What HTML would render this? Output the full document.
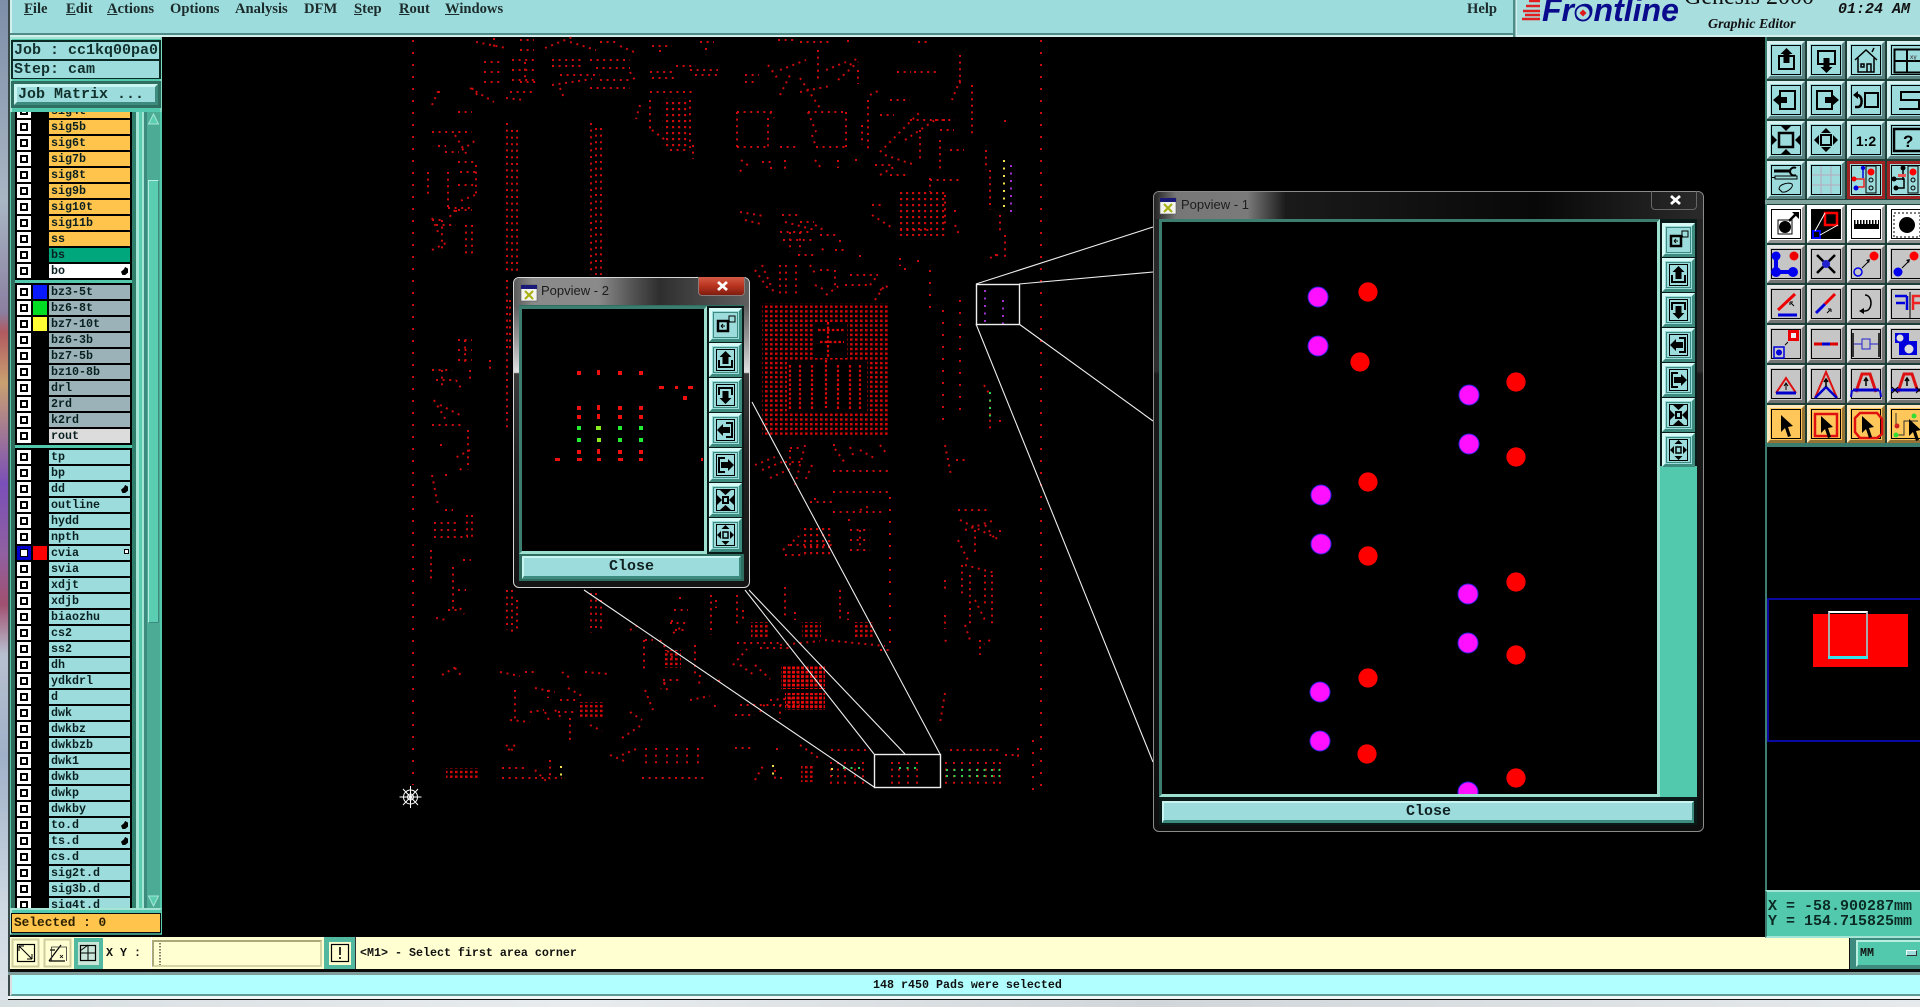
<!DOCTYPE html>
<html><head><meta charset="utf-8"><title>Genesis 2000</title>
<style>
html,body{margin:0;padding:0;background:#000;overflow:hidden}
#p{position:relative;width:1920px;height:1007px;overflow:hidden;background:#000;font-family:"Liberation Mono",monospace;font-weight:bold;color:#102020}
#p div{position:absolute;box-sizing:border-box}
.m{font:bold 14.6px/20px "Liberation Serif",serif;top:-1px;color:#1c2b2b}
.m u{text-decoration:underline}
.t{font-size:15px;line-height:18px;white-space:pre;color:#12302c}
.r{left:49px;width:81px;height:14px;font-size:11.67px;line-height:14px;padding-left:2px;background:#9cdcdc;color:#0a2020;white-space:pre}
.r:before{content:"";position:absolute;left:-29px;top:3px;width:8px;height:8px;box-sizing:border-box;border:2px solid #000;background:#fff;outline:3px solid #fff}
.o{background:#ffc44c}.g{background:#9bb3b8}
.c{font-size:11.67px;white-space:pre;color:#101010}
.h:after{content:"";position:absolute;left:72px;top:3px;width:7px;height:8px;background:#000;clip-path:polygon(0 60%,40% 30%,60% 0,100% 20%,100% 70%,60% 100%,20% 100%)}
.bev{border:3px solid;border-color:#c8f5f0 #3d8a7e #3d8a7e #c8f5f0;background:#9cdcdc}
.ti{font:13px/16px "Liberation Sans",sans-serif;color:#1a1a1a;white-space:pre}
</style></head><body><div id="p">

<!-- desktop chrome -->
<div style="left:0;top:0;width:8px;height:1007px;background:linear-gradient(180deg,#7d8ea8 0,#a9b6c4 20%,#8a7fa0 31%,#b25a60 33%,#c9a070 38%,#7a4fb8 48%,#9060a0 55%,#a05070 60%,#b8c0d0 65%,#a0b0c8 75%,#cdd8e2 90%,#dfe6ea 100%)"></div>
<div style="left:8px;top:0;width:2px;height:1000px;background:#3a4a4a"></div>

<!-- menu bar -->
<div style="left:10px;top:0;width:1503px;height:37px;background:#9cdcdc;border-bottom:2px solid #d3f0ee;border-left:2px solid #d3f0ee"></div>
<div style="left:10px;top:33px;width:1503px;height:2px;background:#4f8b87"></div>
<div style="left:1513px;top:0;width:4px;height:37px;background:linear-gradient(90deg,#4f8b87 0 60%,#d3f0ee 60%)"></div>
<div style="left:1517px;top:0;width:403px;height:37px;background:#a8dede;border-bottom:2px solid #d3f0ee"></div>
<div class="m" style="left:24px"><u>F</u>ile</div>
<div class="m" style="left:66px"><u>E</u>dit</div>
<div class="m" style="left:107px"><u>A</u>ctions</div>
<div class="m" style="left:170px">Options</div>
<div class="m" style="left:235px">Analysis</div>
<div class="m" style="left:304px">DFM</div>
<div class="m" style="left:354px"><u>S</u>tep</div>
<div class="m" style="left:399px"><u>R</u>out</div>
<div class="m" style="left:445px"><u>W</u>indows</div>
<div class="m" style="left:1467px">Help</div>
<div style="left:1542px;top:-8px;font:italic bold 32px/36px 'Liberation Sans',sans-serif;color:#0a0a8c;white-space:pre">Frontline</div>
<div style="left:1684px;top:-18px;font:24px/30px 'Liberation Serif',serif;color:#111;white-space:pre">Genesis 2000</div>
<div style="left:1708px;top:16px;font:italic bold 14px/17px 'Liberation Serif',serif;color:#111;white-space:pre">Graphic Editor</div>
<div style="left:1838px;top:1px;font:italic bold 15px/18px 'Liberation Mono',monospace;color:#111;white-space:pre">01:24 AM</div>

<!-- left panel -->
<div style="left:10px;top:37px;width:152px;height:898px;background:#52c9ac;border:2px solid;border-color:#a5e5d5 #7fd8c0 #3d8a7e #a5e5d5"></div>
<div style="left:11px;top:40px;width:150px;height:39px;background:#0c2a24"></div>
<div style="left:13px;top:42px;width:146px;height:17px;background:#9cdcdc"></div>
<div style="left:13px;top:61px;width:146px;height:17px;background:#9cdcdc"></div>
<div class="t" style="left:14px;top:42px">Job : cc1kq00pa0</div>
<div class="t" style="left:14px;top:61px">Step: cam</div>
<div style="left:11px;top:81px;width:150px;height:27px;background:#2f6f62"></div>
<div class="bev" style="left:14px;top:84px;width:144px;height:21px"></div>
<div class="t" style="left:18px;top:86px">Job Matrix ...</div>

<!-- layer list -->
<div style="left:10px;top:112px;width:152px;height:800px;background:#52c9ac"></div>
<div style="left:11px;top:112px;width:4px;height:796px;background:#2f6b5a"></div>
<div style="left:132px;top:112px;width:4px;height:796px;background:#2f7f6c"></div>
<div style="left:136px;top:112px;width:3px;height:796px;background:#a5e5d5"></div>
<div style="left:139px;top:112px;width:3px;height:796px;background:#5bcdb0"></div>
<div style="left:142px;top:112px;width:2px;height:796px;background:#a5e5d5"></div>
<div style="left:144px;top:112px;width:3px;height:796px;background:#3d8a7e"></div>
<div style="left:147px;top:112px;width:13px;height:796px;background:#4cab95"></div>
<div style="left:148px;top:180px;width:11px;height:443px;background:#5bcdb0;border:1px solid;border-color:#b8efe0 #3d8a7e #3d8a7e #b8efe0"></div>
<div style="left:15px;top:112px;width:117px;height:796px;background:#000;overflow:hidden"><div style="left:-15px;top:-112px;width:160px;height:920px">
<div class="r o" style="top:104px">sig4t</div>
<div class="r o" style="top:120px">sig5b</div>
<div class="r o" style="top:136px">sig6t</div>
<div class="r o" style="top:152px">sig7b</div>
<div class="r o" style="top:168px">sig8t</div>
<div class="r o" style="top:184px">sig9b</div>
<div class="r o" style="top:200px">sig10t</div>
<div class="r o" style="top:216px">sig11b</div>
<div class="r o" style="top:232px">ss</div>
<div class="r" style="top:248px;background:#00a67c">bs</div>
<div class="r h" style="top:264px;background:#fff">bo</div>
<div style="left:0;top:280px;width:140px;height:3px;background:#52c9ac"></div>
<div class="r g" style="top:285px">bz3-5t</div>
<div class="r g" style="top:301px">bz6-8t</div>
<div class="r g" style="top:317px">bz7-10t</div>
<div class="r g" style="top:333px">bz6-3b</div>
<div class="r g" style="top:349px">bz7-5b</div>
<div class="r g" style="top:365px">bz10-8b</div>
<div class="r g" style="top:381px">drl</div>
<div class="r g" style="top:397px">2rd</div>
<div class="r g" style="top:413px">k2rd</div>
<div class="r" style="top:429px;background:#dcdcdc">rout</div>
<div style="left:0;top:445px;width:140px;height:3px;background:#52c9ac"></div>
<div class="r" style="top:450px">tp</div>
<div class="r" style="top:466px">bp</div>
<div class="r h" style="top:482px">dd</div>
<div class="r" style="top:498px">outline</div>
<div class="r" style="top:514px">hydd</div>
<div class="r" style="top:530px">npth</div>
<div class="r" style="top:546px">cvia</div>
<div class="r" style="top:562px">svia</div>
<div class="r" style="top:578px">xdjt</div>
<div class="r" style="top:594px">xdjb</div>
<div class="r" style="top:610px">biaozhu</div>
<div class="r" style="top:626px">cs2</div>
<div class="r" style="top:642px">ss2</div>
<div class="r" style="top:658px">dh</div>
<div class="r" style="top:674px">ydkdrl</div>
<div class="r" style="top:690px">d</div>
<div class="r" style="top:706px">dwk</div>
<div class="r" style="top:722px">dwkbz</div>
<div class="r" style="top:738px">dwkbzb</div>
<div class="r" style="top:754px">dwk1</div>
<div class="r" style="top:770px">dwkb</div>
<div class="r" style="top:786px">dwkp</div>
<div class="r" style="top:802px">dwkby</div>
<div class="r h" style="top:818px">to.d</div>
<div class="r h" style="top:834px">ts.d</div>
<div class="r" style="top:850px">cs.d</div>
<div class="r" style="top:866px">sig2t.d</div>
<div class="r" style="top:882px">sig3b.d</div>
<div class="r" style="top:898px">sig4t.d</div>
<div style="left:33px;top:285px;width:14px;height:14px;background:#0a1aff"></div>
<div style="left:33px;top:301px;width:14px;height:14px;background:#00dd22"></div>
<div style="left:33px;top:317px;width:14px;height:14px;background:#ffff33"></div>
<div style="left:33px;top:546px;width:14px;height:14px;background:#ff0000"></div>
<div style="left:17px;top:546px;width:14px;height:14px;border:3px solid #0000c8;background:#fff"></div>
<div style="left:20px;top:549px;width:8px;height:8px;border:1px solid #000;background:#fff"></div>
<div style="left:124px;top:549px;width:5px;height:5px;border:1px solid #000;background:#fff"></div>
</div></div>

<!-- selected -->
<div style="left:10px;top:908px;width:152px;height:27px;background:#52c9ac;border:2px solid;border-color:#a5e5d5 #5bcdb0 #3d8a7e #a5e5d5"></div>
<div style="left:11px;top:913px;width:150px;height:20px;background:#ffc44c;border:1px solid #0a0a0a"></div>
<div class="t" style="left:14px;top:914px;color:#2a2000;font-size:12.8px">Selected : 0</div>

<!-- bottom bars -->
<div style="left:10px;top:937px;width:1839px;height:32px;background:#ffffd2"></div>
<div style="left:10px;top:969px;width:1910px;height:3px;background:#0a0a0a"></div>
<div style="left:8px;top:972px;width:1912px;height:3px;background:#7f9d9a"></div>
<div style="left:10px;top:975px;width:1910px;height:21px;background:#b2ffff;border-left:2px solid #ddd;border-bottom:2px solid #5e9a98"></div>
<div style="left:8px;top:996px;width:1912px;height:3px;background:#f0f8f8"></div>
<div style="left:8px;top:999px;width:1912px;height:1px;background:#111"></div>
<div style="left:0;top:1000px;width:1920px;height:7px;background:linear-gradient(90deg,#d8dfe2,#e8ecee 30%,#d0d6da 60%,#e6eaec)"></div>
<div style="left:74px;top:938px;width:29px;height:31px;background:#52b8a0"></div>
<div style="left:78px;top:942px;width:21px;height:23px;background:#c9e6d8"></div>
<div class="c" style="left:106px;top:946px;line-height:14px">X Y :</div>
<div style="left:151px;top:937px;width:172px;height:32px;background:#ffffd2;border-left:1px solid #fff"></div>
<div style="left:152px;top:940px;width:170px;height:27px;background:#ffffd2;border:2px solid;border-color:#a9a97a #d5d5a5 #d5d5a5 #a9a97a"></div>
<div style="left:324px;top:937px;width:32px;height:32px;background:#52b8a0;border-right:1px solid #333"></div>
<div style="left:329px;top:942px;width:22px;height:23px;background:#ffffd2"></div>
<div class="c" style="left:360px;top:946px;line-height:14px">&lt;M1&gt; - Select first area corner</div>
<div class="c" style="left:873px;top:978px;line-height:14px">148 r450 Pads were selected</div>
<div style="left:1849px;top:937px;width:71px;height:32px;background:#3d8a7e;border-left:1px solid #111"></div>
<div style="left:1856px;top:940px;width:64px;height:27px;background:#52c9ac;border:2px solid;border-color:#b8efe0 #3d8a7e #3d8a7e #b8efe0;border-right:0"></div>
<div class="c" style="left:1860px;top:946px;line-height:14px">MM</div>
<div style="left:1906px;top:950px;width:11px;height:6px;background:#9cdcdc;border:1px solid;border-color:#fff #333 #333 #fff"></div>

<!-- right panel -->
<div style="left:1765px;top:37px;width:155px;height:410px;background:#1c3f38;border-left:2px solid #3d7d70"></div>
<div style="left:1765px;top:200px;width:155px;height:4px;background:#7fa59e"></div>
<div style="left:1765px;top:443px;width:155px;height:4px;background:#3d7d70"></div>
<div style="left:1765px;top:447px;width:2px;height:443px;background:#3d7d70"></div>
<div style="left:1767px;top:598px;width:153px;height:144px;border:2px solid #0a0aa0;border-right:0"></div>
<div style="left:1813px;top:614px;width:95px;height:53px;background:#ff0000"></div>
<div style="left:1828px;top:611px;width:40px;height:46px;border:2px solid #aaa;border-top-color:#fff;border-bottom:0"></div>
<div style="left:1828px;top:656px;width:40px;height:3px;background:#33e6ee"></div>
<div style="left:1765px;top:890px;width:155px;height:48px;background:#52c9ac;border-top:2px solid #a5e5d5;border-left:2px solid #3d7d70;border-bottom:2px solid #a5e5d5"></div>
<div class="t" style="left:1768px;top:899px;color:#0c2a24;line-height:15px">X = -58.900287mm</div>
<div class="t" style="left:1768px;top:914px;color:#0c2a24;line-height:15px">Y = 154.715825mm</div>

<!-- PCB -->
<svg width="1920" height="1007" style="position:absolute;left:0;top:0">
<defs>
<pattern id="pa" width="5" height="4.7" patternUnits="userSpaceOnUse"><rect width="2.6" height="2.4" fill="#d00808"/></pattern>
<pattern id="pb2" width="4.5" height="4.3" patternUnits="userSpaceOnUse"><rect width="3" height="2.8" fill="#e80a0a"/></pattern>
<pattern id="pc" width="6" height="6" patternUnits="userSpaceOnUse"><rect width="2.2" height="2.2" fill="#cc0a0a"/></pattern>
</defs>
<g fill="none" stroke="#cc0c0c" stroke-width="2">
<g stroke-dasharray="2 10">
<path d="M413 40V785M1041 40V790M890 497V650M1033 740V792M960 300V420M943 310V420M930 270V310"/>
</g>
<g stroke-dasharray="2 4.6">
<path d="M476 42l30 6M494 38v10M520 40h14M520 50h14M545 48l30-12M570 42l26 8M600 42h16M620 46l14 6M652 46h20M660 50v6M700 42h14M706 48v4M778 40h16M800 42h30M848 40v6M918 42h10"/>
<path d="M484 62h18M484 72h18M484 82h18M512 60h26M512 70h26M512 80h26M525 62v20M520 82h18M470 88l24 14M510 92h22M506 98l18 2"/>
<path d="M552 60h30M552 66h30M560 75h40M552 85l40-6M590 60h40M596 68h34M600 80h30M590 88h40M630 72l6 10M560 88l4 10"/>
<path d="M650 72h24M676 66h20M690 70h28M695 75h24M652 78h22"/>
<path d="M650 92h46M650 100v30M652 130l16 12M670 150h20M690 100v48M693 145v14M640 105l-4 14"/>
<path d="M432 105l8-18M438 92h6M458 112h14M472 88l6 8M455 135l12 20M432 132h40M438 146h8M462 150l14-10M445 152h14M458 162h16M476 165v30M475 195l-15 6M428 172v24M448 172v36M460 172h16M458 185h18M448 208h26M456 210v6M432 220h12M455 210l-8 10M458 210h14M432 218l6 14M436 225h20M442 220v30M432 250l16-8M466 225v30M472 225v30"/>
<path d="M737 112h38M737 112v35M737 147h30M770 112l4 6M768 118v30M780 147h18"/>
<path d="M808 112h38M808 112l8 20M812 135l4 12M816 147h30M846 112v35M800 78l20 30M780 70l26-10M826 70l20-8M818 50v30"/>
<path d="M745 75h14M745 82h12M768 65l10 14M780 95l10-20M800 92l30-6M838 80l20-18M858 70v14M850 65l6-6M870 95l10-5M868 100v50M862 125v20M880 115h14M890 100h20M910 120h40M960 55v30M972 85v50M960 80l-8 20"/>
<path d="M741 160l8 6M762 162h10M785 160v10M815 160l6 8M838 160v8M855 160h6M740 170l4 4M770 168h4"/>
<path d="M897 72h14M914 72h24"/>
<path d="M880 152l40-40M875 165h20M885 155l30 10M905 140l30-20M935 120h20M920 130v30M940 130h14M940 140v30M950 150h14M880 175l14-8M890 175h16"/>
<path d="M930 180h32M930 178v14M945 195v30M955 210v4M955 225l5 12M900 230h30M872 205h12M872 215l22 14"/>
<path d="M740 212l24 4M745 220l16 4M782 215h16M785 222l30 8M800 222h14M815 225l10 6M780 232h30M783 240h30M790 232v20M800 232v20M820 235h18M840 240v4M798 255h16M822 250l4-4M835 250h10M860 255v6M900 258v8M918 260v4M905 268v2"/>
<path d="M755 270l14 20M762 265l12 28M780 265v30M786 265v30M796 265v30M810 265l6 10M820 270h10M815 285l10 5M835 270v20M845 285h26M850 275h28M880 290l8-4M875 300l10-15M870 285l8-10M826 295l14-10"/>
<path d="M986 150v20M990 170v40M1000 215v16M1005 235v25M995 255h4M990 258l10-4M1005 120v6M984 385l6 10M990 400v30M1000 420v4"/>
<path d="M507 123v150M512 130v145M517 130v145M507 280v150M510 300v50"/>
<path d="M591 123v152M596 128v147M601 128v147"/>
<path d="M458 340h14M458 350h14M458 360h14M465 340v25M432 370h20M436 380h20M442 370v16M456 380l6 10M434 400l12 20M470 370v10M490 360v12M440 405l20 10M432 425h30"/>
<path d="M755 465l20-8M762 470l20-8M770 478l22-10M785 462h20M790 450v16M805 445l-10 40M812 465l-8 18M790 448h10"/>
<path d="M833 445h6M850 447l4 10M835 449l10 14M860 450l14 8M880 445l6 8M833 471h55M833 492h55M810 502h22M833 512h52M848 520h6M815 498v6M860 510l10-4"/>
<path d="M785 555h20M790 545h42M783 550l16-14M850 530h20M850 540h20M850 550h20M860 530v20"/>
<path d="M737 643h45M780 645l40-4M825 640l60 6M760 648h30M880 650h10"/>
<path d="M644 640v32M660 640l14 20M695 645v32M645 690l8 20M663 680h16M664 682l4 10M665 683l-4 6M733 665l14-16M720 680l-5 4M740 665l14 10M755 665l15 14M700 675l-1 10M690 700l20-4M715 705l-1 6M740 705h60M735 715h20M760 712l6-10M770 700l30-2M780 705v14"/>
<path d="M442 675l14-8M455 668l8 10M500 672l20 4M562 672l8 6M585 672l24 2M525 672h10"/>
<path d="M515 690v30M535 688l20 4M548 690v8M568 688l14 8M530 712l14-2M545 712l4 8M510 720l20 2M570 718v24M590 725l12 6M560 700h18M558 712h16M555 710l8 10"/>
<path d="M630 712l12 8M622 738l18-12M622 755l14-6M610 755l14 6"/>
<path d="M502 768h24M502 778h60M535 770l14 14M550 760v20M506 745l10 8M515 745l-8 6"/>
<path d="M646 748v19M656 748v19M667 748v19M677 748v19M687 748v19M698 748v19M642 778h63M735 748h18M777 748v6M775 770v10M755 780l8-14M780 778h4M800 745l20 14"/>
<path d="M831 762v22M838 762v22M845 762v22M855 762v22M863 762v22M892 762v22M899 762v22M908 762v22M917 762v22M946 762v22M954 762v22M962 762v22M970 762v22M978 762v22M986 762v22M994 762v22M1000 762v22M831 750h36M950 750h50M1005 755h14"/>
<path d="M434 523h26M434 530h26M434 537h34M467 515v25M472 515v25M431 550v30M453 567v45M448 610h12M436 618l10 2M460 608l4 6M463 560h8M458 590h8"/>
<path d="M440 445h6M432 475l6 30M470 450l-15 8M460 470l4-5M445 475h4M468 430v40M445 510h8"/>
<path d="M507 590v40M512 590v42M517 600v32M591 593v40M596 593v38M601 600v30"/>
<path d="M674 610h14M672 620v6M670 623h16M675 630h10M680 628l-8 6M711 595v40M716 600v8M737 595v30M743 610v12M785 587v30M795 612v8M840 590v30M848 612v8M680 597v4M630 630l10-6M645 640h8"/>
<path d="M958 510h30M960 520l40 20M965 530l30-10M958 540l10 20M975 530v25M985 525l10 14M1000 530v6M965 565l30 8M962 565v30M970 575v50M975 600l10 20M985 575v30M992 575v50M965 625l5 15M980 640v15M990 640l-6 4"/>
<path d="M945 580v10M945 615v14M945 640l4 5M945 693l-5 30M956 460h12M945 445l6 30M1018 748v12"/>
</g>
</g>
<rect x="762" y="303" width="126" height="134" fill="url(#pa)"/>
<rect x="787" y="362" width="80" height="50" fill="#000"/>
<rect x="815" y="322" width="32" height="36" fill="#000"/>
<path d="M790 365v44M800 365v44M812 365v44M826 360v48M838 365v44M850 365v44M860 365v44M818 330h26M820 342h24M828 322v36" stroke="#d80808" stroke-width="2.2" stroke-dasharray="2.6 2" fill="none"/>
<rect x="662" y="98" width="28" height="50" fill="url(#pc)"/>
<rect x="898" y="192" width="48" height="44" fill="url(#pc)"/>
<rect x="800" y="525" width="32" height="30" fill="url(#pc)"/>
<rect x="751" y="622" width="19" height="16" fill="url(#pa)"/>
<rect x="802" y="622" width="19" height="16" fill="url(#pa)"/>
<rect x="854" y="622" width="19" height="16" fill="url(#pa)"/>
<rect x="781" y="666" width="44" height="23" fill="url(#pb2)"/>
<rect x="785" y="693" width="40" height="17" fill="url(#pb2)"/>
<rect x="663" y="650" width="18" height="18" fill="url(#pa)"/>
<rect x="579" y="702" width="26" height="15" fill="url(#pa)"/>
<rect x="446" y="768" width="34" height="10" fill="url(#pa)"/>
<rect x="801" y="766" width="14" height="16" fill="url(#pa)"/>
<g fill="none" stroke-width="2" stroke-dasharray="2 5.5">
<path d="M1004 160v50M561 766v10M773 765v12M832 768v8" stroke="#f2e050"/>
<path d="M1011 165v48M985 290v34M1003 300v24" stroke="#a030d0"/>
<path d="M990 392v30" stroke="#30d050"/>
<path d="M843 768h20M899 768h20M946 770h54M946 776h54" stroke="#30d050"/>
</g>
<!-- white rubber-band lines -->
<g fill="none" stroke="#eeeeee" stroke-width="1.1">
<rect x="976.5" y="284.5" width="43" height="40" stroke-width="1.4"/>
<rect x="874.5" y="754.5" width="66" height="33" stroke-width="1.4"/>
<path d="M976 284L1153 227M1019 284L1153 272M1019 324L1153 421M976 324L1153 762"/>
<path d="M874 787L584 590M874 754L745 590M905 754L749 590M940 754L752 402"/>
</g>
<g stroke="#fff" stroke-width="1" fill="none">
<circle cx="410.5" cy="797" r="3"/><circle cx="410.5" cy="797" r="7"/>
<path d="M410.5 786v22M399.5 797h22M403 789l15 16M403 805l15-16"/>
</g>
</svg>

<!-- Popview 2 window -->
<div style="left:513px;top:277px;width:237px;height:311px;border-radius:6px;border:1px solid #d5d5d5;background:linear-gradient(180deg,#4a4a4a 0,#5f5f5f 9%,#9a9a9a 20%,#e2e2e2 30.5%,#3a3a3a 31%,#222 60%,#141414 100%)"></div>
<div style="left:514px;top:278px;width:235px;height:28px;border-radius:5px 5px 0 0;background:linear-gradient(90deg,#5a5a5a 0,#8a8a8a 8%,#8a8a8a 36%,#555 50%,#2e2e2e 62%,#444 78%,#5e5e5e 100%)"></div>
<div style="left:698px;top:277px;width:47px;height:19px;border-radius:0 0 4px 4px;background:linear-gradient(180deg,#d65a44 0,#b8341f 50%,#7f1d10 100%);border:1px solid #8a7a78;border-top:0"></div>
<div class="ti" style="left:541px;top:283px;color:#1c1c1c;font-size:13px">Popview - 2</div>
<div style="left:519px;top:305px;width:225px;height:276px;background:#2f6f62"></div>
<div style="left:519px;top:306px;width:188px;height:248px;background:#000;border:3px solid;border-color:#3d7d70 #9de0d0 #9de0d0 #3d7d70"></div>
<div style="left:707px;top:306px;width:37px;height:248px;background:#0a1a18"></div>
<div class="bev" style="left:522px;top:556px;width:219px;height:23px;border-width:2px 2px 3px 2px;border-color:#c8f5f0 #3d8a7e #3d8a7e #c8f5f0"></div>
<div class="t" style="left:609px;top:558px;color:#102020">Close</div>

<!-- Popview 1 window -->
<div style="left:1153px;top:191px;width:551px;height:641px;border-radius:6px;border:1px solid #8b8b8b;background:linear-gradient(180deg,#222 0,#2e2e2e 28%,#1a1a1a 28.5%,#0e0e0e 100%)"></div>
<div style="left:1154px;top:192px;width:549px;height:27px;border-radius:5px 5px 0 0;background:linear-gradient(90deg,#222 0,#777 4%,#7a7a7a 17%,#1a1a1a 24%,#080808 70%,#1c1c1c 88%,#2a2a2a 100%)"></div>
<div style="left:1651px;top:191px;width:46px;height:19px;border-radius:0 0 4px 4px;border:1px solid #666;border-top:0"></div>
<div class="ti" style="left:1181px;top:197px;color:#1c1c1c">Popview - 1</div>
<div style="left:1159px;top:219px;width:538px;height:606px;background:#0a1a18"></div>
<div style="left:1159px;top:219px;width:501px;height:578px;background:#000;border:3px solid;border-color:#3d7d70 #9de0d0 #9de0d0 #3d7d70"></div>
<div style="left:1660px;top:466px;width:37px;height:331px;background:#52c9ac"></div>
<div class="bev" style="left:1162px;top:801px;width:532px;height:22px;border-width:2px 2px 3px 2px"></div>
<div class="t" style="left:1406px;top:803px;color:#102020">Close</div>

<!-- top svg: icons and popup content -->
<svg width="1920" height="1007" style="position:absolute;left:0;top:0">
<defs>
<g id="f"><rect width="38" height="38" fill="currentColor"/><path d="M0 0h38l-3 3H3v32l-3 3z" fill="#fff" opacity=".6"/><path d="M38 38H0l3-3h32V3l3-3z" fill="#000" opacity=".42"/><rect x="4.5" y="4.5" width="29" height="29" fill="none" stroke="#000"/></g>
<g id="fr"><rect width="38" height="38" fill="#a02222"/><rect x="3" y="3" width="32" height="32" fill="#9cdcdc"/><rect x="4.5" y="4.5" width="29" height="29" fill="none" stroke="#000"/></g>
<g id="q"><rect width="33" height="34" fill="#9cdcdc"/><path d="M0 0h33l-3 3H3v28l-3 3z" fill="#d6fbf6"/><path d="M33 34H0l3-3h27V3l3-3z" fill="#3d8a7e"/><rect x="4.5" y="4.5" width="24" height="25" fill="none" stroke="#3d8a7e"/></g>
<rect id="fb" x="7.500" y="6.500" width="18" height="21" fill="none" stroke="#000"/>
<path id="cur" d="M0 0L12 11L7 12L10 21L7 22L4 13L0 17Z"/>
<g id="p1"><use href="#q"/><path d="M9 13h10v10H9z" fill="none" stroke="#000" stroke-width="2.5"/><path d="M20 8h6v6h-6z" fill="none" stroke="#000"/><path d="M16 18h-4M12 18l2-2M12 18l2 2M19 14l2-1" stroke="#000" fill="none"/></g>
<g id="p2"><use href="#q"/><use href="#fb"/><path d="M10 17v7h13v-7" fill="none" stroke="#000" stroke-width="2"/><path d="M16.500 8l6 6h-3v7h-6v-7h-3z"/></g>
<g id="p3"><use href="#q"/><use href="#fb"/><path d="M10 17V10h13v7" fill="none" stroke="#000" stroke-width="2"/><path d="M16.500 26l6-6h-3v-7h-6v7h-3z"/></g>
<g id="p4"><use href="#q"/><use href="#fb"/><path d="M17 10h6v14h-6" fill="none" stroke="#000" stroke-width="2"/><path d="M8 17l6-6v3h7v6h-7v3z"/></g>
<g id="p5"><use href="#q"/><use href="#fb"/><path d="M16 10h-6v14h6" fill="none" stroke="#000" stroke-width="2"/><path d="M25 17l-6-6v3h-7v6h7v3z"/></g>
<g id="p6"><use href="#q"/><use href="#fb"/><path d="M14 14h5v6h-5z" fill="none" stroke="#000" stroke-width="2"/><path d="M11 7h11l-5.500 5zM11 27h11l-5.500-5zM8 12v10l5-5zM25 12v10l-5-5z"/></g>
<g id="p7"><use href="#q"/><use href="#fb"/><path d="M14 14h5v6h-5z" fill="none" stroke="#000" stroke-width="1.5"/><path d="M16.500 7l4 4h-8zM16.500 27l4-4h-8zM8 17l4-4v8zM25 17l-4-4v8z"/></g>
<g id="ico"><rect width="16" height="16" fill="#f4f4ee" stroke="#555" stroke-width=".6"/><rect width="16" height="4" fill="#1a1a78"/><path d="M4 6l8 8M12 6l-8 8" stroke="#a8b010" stroke-width="2"/></g>
</defs>

<!-- Popview 2 contents -->
<use href="#ico" x="521" y="285"/>
<path d="M718 282l9 8M727 282l-9 8" stroke="#fff" stroke-width="2.800"/>
<use href="#p1" x="709" y="308"/><use href="#p2" x="709" y="343"/><use href="#p3" x="709" y="378"/><use href="#p4" x="709" y="413"/><use href="#p5" x="709" y="448"/><use href="#p6" x="709" y="483"/><use href="#p7" x="709" y="518"/>
<g fill="#f01010">
<rect x="577" y="371" width="4" height="4"/><rect x="597" y="370" width="3" height="5"/><rect x="618" y="371" width="4" height="4"/><rect x="639" y="371" width="4" height="4"/>
<rect x="577" y="406" width="4" height="4"/><rect x="597" y="405" width="3" height="5"/><rect x="618" y="406" width="4" height="4"/><rect x="639" y="406" width="4" height="4"/>
<rect x="577" y="415" width="4" height="4"/><rect x="597" y="414" width="3" height="5"/><rect x="618" y="415" width="4" height="4"/><rect x="639" y="415" width="4" height="4"/>
<rect x="577" y="450" width="4" height="4"/><rect x="597" y="449" width="3" height="5"/><rect x="618" y="450" width="4" height="4"/><rect x="639" y="450" width="4" height="4"/>
<rect x="555" y="458" width="5" height="3"/><rect x="577" y="458" width="5" height="3"/><rect x="597" y="458" width="4" height="3"/><rect x="618" y="458" width="5" height="3"/><rect x="639" y="458" width="4" height="3"/><rect x="701" y="458" width="2" height="3"/>
<rect x="659" y="386" width="5" height="3"/><rect x="675" y="386" width="3" height="3"/><rect x="688" y="386" width="5" height="3"/><rect x="683" y="396" width="4" height="4"/>
</g>
<g fill="#22ee33">
<rect x="577" y="426" width="4" height="4"/><rect x="596" y="426" width="5" height="4" fill="#88ee22"/><rect x="618" y="426" width="4" height="4"/><rect x="639" y="426" width="4" height="4"/>
<rect x="577" y="438" width="4" height="4"/><rect x="597" y="438" width="4" height="4" fill="#88ee22"/><rect x="618" y="438" width="4" height="4"/><rect x="639" y="438" width="4" height="4"/>
</g>

<!-- Popview 1 contents -->
<use href="#ico" x="1160" y="198"/>
<path d="M1671 196l9 8M1680 196l-9 8" stroke="#fff" stroke-width="2.800"/>
<use href="#p1" x="1662" y="223"/><use href="#p2" x="1662" y="258"/><use href="#p3" x="1662" y="293"/><use href="#p4" x="1662" y="328"/><use href="#p5" x="1662" y="363"/><use href="#p6" x="1662" y="398"/><use href="#p7" x="1662" y="433"/>
<svg x="1162" y="222" width="495" height="572" viewBox="1162 222 495 572">
<g fill="#ff10ff" stroke="#3020e0" stroke-width="1">
<circle cx="1318" cy="297" r="10"/><circle cx="1318" cy="346" r="10"/><circle cx="1469" cy="395" r="10"/><circle cx="1469" cy="444" r="10"/>
<circle cx="1321" cy="495" r="10"/><circle cx="1321" cy="544" r="10"/><circle cx="1468" cy="594" r="10"/><circle cx="1468" cy="643" r="10"/>
<circle cx="1320" cy="692" r="10"/><circle cx="1320" cy="741" r="10"/><circle cx="1468" cy="792" r="10"/>
</g>
<g fill="#ff0000">
<circle cx="1368" cy="292" r="9.600"/><circle cx="1360" cy="362" r="9.600"/><circle cx="1516" cy="382" r="9.600"/><circle cx="1516" cy="457" r="9.600"/>
<circle cx="1368" cy="482" r="9.600"/><circle cx="1368" cy="556" r="9.600"/><circle cx="1516" cy="582" r="9.600"/><circle cx="1516" cy="655" r="9.600"/>
<circle cx="1368" cy="678" r="9.600"/><circle cx="1367" cy="754" r="9.600"/><circle cx="1516" cy="778" r="9.600"/>
</g>
</svg>

<!-- Right toolbar -->
<g color="#9cdcdc">
<use href="#f" x="1767" y="41"/><use href="#f" x="1807" y="41"/><use href="#f" x="1847" y="41"/><use href="#f" x="1887" y="41"/>
<use href="#f" x="1767" y="81"/><use href="#f" x="1807" y="81"/><use href="#f" x="1847" y="81"/><use href="#f" x="1887" y="81"/>
<use href="#f" x="1767" y="121"/><use href="#f" x="1807" y="121"/><use href="#f" x="1847" y="121"/><use href="#f" x="1887" y="121"/>
<use href="#f" x="1767" y="161"/><use href="#f" x="1807" y="161"/><use href="#fr" x="1847" y="161"/><use href="#fr" x="1887" y="161"/>
</g>
<g color="#ffffff">
<use href="#f" x="1767" y="205"/><use href="#f" x="1807" y="205"/><use href="#f" x="1847" y="205"/><use href="#f" x="1887" y="205"/>
</g>
<g color="#c6c6c6">
<use href="#f" x="1767" y="245"/><use href="#f" x="1807" y="245"/><use href="#f" x="1847" y="245"/><use href="#f" x="1887" y="245"/>
<use href="#f" x="1767" y="285"/><use href="#f" x="1807" y="285"/><use href="#f" x="1847" y="285"/><use href="#f" x="1887" y="285"/>
<use href="#f" x="1767" y="325"/><use href="#f" x="1807" y="325"/><use href="#f" x="1847" y="325"/><use href="#f" x="1887" y="325"/>
<use href="#f" x="1767" y="365"/><use href="#f" x="1807" y="365"/><use href="#f" x="1847" y="365"/><use href="#f" x="1887" y="365"/>
</g>
<g color="#ffc75a">
<use href="#f" x="1767" y="405"/><use href="#f" x="1807" y="405"/><use href="#f" x="1847" y="405"/><use href="#f" x="1887" y="405"/>
</g>

<!-- row 1 -->
<g transform="translate(1767,41)"><path d="M12 15h15v13H12z" fill="none" stroke="#000" stroke-width="2"/><path d="M19.500 7l6 6h-3v9h-6v-9h-3z"/></g>
<g transform="translate(1807,41)"><path d="M11 10h17v13H11z" fill="none" stroke="#000" stroke-width="2"/><path d="M19.500 32l-6-6h3v-9h6v9h3z"/></g>
<g transform="translate(1847,41)" fill="none" stroke="#000" stroke-width="1.500"><path d="M8 19L19 9l11 10M11 17v14h16V17M20 23h4v8h-4zM14 23h3v3h-3zM25 11l2-4"/></g>
<g transform="translate(1887,41)"><path d="M7.500 8.500h27v23h-27zM7 20h28M20 8v23" fill="none" stroke="#000" stroke-width="2"/><text x="23" y="18" font-size="6" font-family="Liberation Sans" fill="#555">xy</text></g>
<!-- row 2 -->
<g transform="translate(1767,81)"><path d="M13 10h15v18H13z" fill="none" stroke="#000" stroke-width="2"/><path d="M6 19l7-6v3h7v6h-7v3z"/></g>
<g transform="translate(1807,81)"><path d="M10 10h15v18H10z" fill="none" stroke="#000" stroke-width="2"/><path d="M32 19l-7-6v3h-7v6h7v3z"/></g>
<g transform="translate(1847,81)"><path d="M18 12h13v14H18z" fill="none" stroke="#000" stroke-width="2"/><path d="M8 26h3c5 0 5-12-1-12H9" fill="none" stroke="#000" stroke-width="2.500"/><path d="M6 14l5-4v8z"/></g>
<g transform="translate(1887,81)"><path d="M33 11H14v8h18v9H12" fill="none" stroke="#000" stroke-width="2"/></g>
<!-- row 3 -->
<g transform="translate(1767,121)"><path d="M12 12h14v14H12z" fill="none" stroke="#000" stroke-width="2.500"/><path d="M14 5h10l-5 5zM14 33h10l-5-5zM5 14l5 5-5 5zM33 14l-5 5 5 5z"/></g>
<g transform="translate(1807,121)"><path d="M14 14h10v10H14z" fill="none" stroke="#000" stroke-width="2"/><path d="M19 7l5 5H14zM19 31l5-5H14zM7 19l5-5v10zM31 19l-5-5v10z"/></g>
<text x="1866" y="146" text-anchor="middle" font-family="Liberation Sans" font-weight="bold" font-size="14" fill="#000">1:2</text>
<g transform="translate(1887,121)"><path d="M7 8h28v22H7z" fill="none" stroke="#000" stroke-width="2.500"/><text x="16" y="26" font-family="Liberation Sans" font-weight="bold" font-size="17" fill="#000">?</text></g>
<!-- row 4 -->
<g transform="translate(1767,161)" fill="none" stroke="#000"><path d="M7 10h17" stroke-width="3"/><path d="M29 7a4 4 0 1 0 0 7" stroke-width="2"/><path d="M8 15h22v3H8zM8 16.500H4"/><path d="M12 28c0-5 10-7 13-5 2 3-5 9-10 8z"/></g>
<path d="M1772 175h28M1772 185h28M1781 166v28M1791 166v28" transform="translate(40,0)" stroke="#b8a8bc" fill="none"/>
<g transform="translate(1847,161)"><path d="M19 5h10v27H19z" fill="none" stroke="#000"/><circle cx="24" cy="11" r="3.500" fill="#f00"/><circle cx="24" cy="19" r="2" fill="none" stroke="#000"/><circle cx="24" cy="27" r="2" fill="none" stroke="#000"/><path d="M16 7v10" stroke="#00d" stroke-width="1.500"/><path d="M7 18h10v8H9" stroke="#e22" fill="none" stroke-width="1.500"/><circle cx="16" cy="7" r="2.200" fill="#00d"/><circle cx="7" cy="18" r="2.500" fill="#e00"/><circle cx="9" cy="27" r="2.500" fill="#00d"/></g>
<g transform="translate(1887,161)"><path d="M21 5h10v27H21z" fill="none" stroke="#000"/><circle cx="26" cy="11" r="3.500" fill="#f00"/><circle cx="26" cy="19" r="2" fill="none" stroke="#000"/><circle cx="26" cy="27" r="2" fill="none" stroke="#000"/><path d="M16 7v12M7 18h10v9H9" stroke="#000" fill="none" stroke-width="1.500"/><path d="M11 13h8v3h-8z" fill="#e55"/><circle cx="16" cy="7" r="2.500"/><circle cx="7" cy="18" r="2.500"/><circle cx="9" cy="27" r="2.500"/></g>
<!-- row 5 -->
<g transform="translate(1767,205)"><path d="M11 15h14v14H11z" fill="none" stroke="#000"/><circle cx="18" cy="22" r="6"/><path d="M22 16l8-8" stroke="#000" stroke-width="2.500"/><path d="M25 7h7v7z"/></g>
<g transform="translate(1807,205)"><rect x="5" y="5" width="28" height="28"/><path d="M18 8h12v12H18z" fill="none" stroke="#f00" stroke-width="2.500"/><path d="M6 26h7v7H6z" fill="none" stroke="#00f" stroke-width="2"/><path d="M8 26l10-18M13 30l18-10" stroke="#fff" fill="none"/></g>
<g transform="translate(1847,205)"><rect x="7" y="19" width="25" height="5"/><path d="M7 17h25" stroke="#000" stroke-width="4" stroke-dasharray="1.500 1.500"/></g>
<g transform="translate(1887,205)"><path d="M7 8h26v24H7z" fill="none" stroke="#000" stroke-dasharray="2 2"/><circle cx="20" cy="20" r="8"/></g>
<!-- row 6 -->
<g transform="translate(1767,245)"><path d="M9 11v16h17" stroke="#00e" stroke-width="4" fill="none"/><circle cx="9" cy="11" r="4.500" fill="#00e"/><circle cx="9" cy="27" r="5" fill="#00e"/><circle cx="26" cy="27" r="5" fill="#00e"/><circle cx="27" cy="11" r="4.500" fill="#e00"/></g>
<g transform="translate(1807,245)"><path d="M10 10l18 18M28 10L10 28" stroke="#000" stroke-width="2.500"/><circle cx="19" cy="19" r="4" fill="#22c"/></g>
<g transform="translate(1847,245)"><circle cx="27" cy="11" r="4.500" fill="#f00"/><circle cx="11" cy="27" r="4" fill="none" stroke="#00e" stroke-width="1.500"/><path d="M15 23l7-7" stroke="#000"/><path d="M23 14l-4 1 3 3z"/></g>
<g transform="translate(1887,245)"><circle cx="27" cy="11" r="4.500" fill="#f00"/><circle cx="11" cy="27" r="4.500" fill="#00e"/><path d="M15 23l7-7" stroke="#000"/><path d="M23 14l-4 1 3 3z"/></g>
<!-- row 7 -->
<g transform="translate(1767,285)"><path d="M11 25L28 9" stroke="#e00" stroke-width="3"/><path d="M11 30h19" stroke="#00d" stroke-width="3"/><path d="M27 21l-3-3M23 17l3 0M23 17l0 3" stroke="#000"/></g>
<g transform="translate(1807,285)"><path d="M9 28l9-9" stroke="#00d" stroke-width="3"/><path d="M18 19l10-10" stroke="#e00" stroke-width="3"/><path d="M20 28l3-3M24 24l-3 0M24 24l0 3" stroke="#000"/></g>
<g transform="translate(1847,285)"><path d="M18 10c8 0 8 16 0 16h-2" fill="none" stroke="#000" stroke-width="1.500"/><path d="M12 26l5-3v6z"/></g>
<g transform="translate(1887,285)" fill="none"><path d="M20 11H8M18 18H9M20 11v14" stroke="#00d" stroke-width="2.500"/><path d="M23 7v26" stroke="#000"/><path d="M26 25V11h10M26 18h8" stroke="#e22" stroke-width="2.500"/></g>
<!-- row 8 -->
<g transform="translate(1767,325)"><rect x="21" y="5" width="11" height="11" fill="#e00"/><rect x="24" y="8" width="5" height="5" fill="#eee"/><path d="M7 22h10v11H7z" fill="none" stroke="#00d" stroke-width="1.500"/><circle cx="12" cy="27.500" r="3" fill="#00d"/><path d="M18 20l3-3" stroke="#000"/></g>
<path d="M1814 344h24" stroke="#d00" stroke-width="3"/><path d="M1822 344h8" stroke="#00c" stroke-width="3"/>
<g transform="translate(1847,325)" fill="none"><path d="M6 8v24M32 8v24" stroke="#000" stroke-width="1.500"/><path d="M15 14h8v10h-8z" stroke="#22c"/><path d="M7 19h8M23 19h8" stroke="#22c"/></g>
<g transform="translate(1887,325)"><path d="M8 8h14v8h8v14H12V18H8z" fill="#00d"/><circle cx="13" cy="13" r="3.500" fill="#ddd"/><circle cx="22" cy="24" r="4.500" fill="#ddd"/></g>
<!-- row 9 -->
<g transform="translate(1767,365)" fill="none"><path d="M9 28l10-15 10 15" stroke="#d11" stroke-width="2"/><path d="M9 28h20" stroke="#00c" stroke-width="3"/><path d="M19 25v-6M17 21l2-3 2 3" stroke="#000"/></g>
<g transform="translate(1807,365)" fill="none"><path d="M8 33L19 7l11 26" stroke="#d11" stroke-width="2"/><path d="M8 33l11-11 11 11" stroke="#00c" stroke-width="2.500"/><path d="M19 22v-7M17 17l2-3 2 3" stroke="#000" stroke-width="1.500"/></g>
<g transform="translate(1847,365)" fill="none"><path d="M9 27L15 9h8l6 18" stroke="#d11" stroke-width="3"/><path d="M6 25h26" stroke="#00c" stroke-width="3"/><path d="M5 25l-1 7M33 25l1 7" stroke="#00c" stroke-width="2"/><path d="M19 21v-7M17 16l2-3 2 3" stroke="#000" stroke-width="1.500"/></g>
<g transform="translate(1887,365)" fill="none"><path d="M11 27L17 9h8l6 18" stroke="#d11" stroke-width="3"/><path d="M4 25h34" stroke="#00c" stroke-width="3"/><path d="M5 22l6 6M11 22l-6 6M29 22l6 6M35 22l-6 6" stroke="#000"/><path d="M20 21v-7M18 16l2-3 2 3" stroke="#000" stroke-width="1.500"/></g>
<!-- row 10 -->
<use href="#cur" x="1781" y="415"/>
<path d="M1815 414h22v22h-22z" fill="none" stroke="#e01010" stroke-width="2.500"/><use href="#cur" x="1821" y="416"/>
<path d="M1860 413h17l5 6v15l-5 4h-17l-5-6v-14z" fill="none" stroke="#e01010" stroke-width="2.500"/><use href="#cur" x="1862" y="416"/>
<g transform="translate(1887,405)"><path d="M9 8v13M9 30h8V16h14" fill="none" stroke="#333"/><circle cx="10" cy="21" r="2.500" fill="#c22"/><circle cx="9" cy="30" r="2.500" fill="#3d3"/><circle cx="27" cy="11" r="2.500" fill="#3d3"/><use href="#cur" x="22" y="14"/></g>

<!-- Logo -->
<g transform="translate(1521,0)" stroke="#e02020" stroke-width="2.600"><path d="M8 1h11M5 6h14M2 11h17M4 15h15M1 19h18" fill="none"/></g>
<circle cx="1583" cy="13" r="7.500" fill="#a8dede" stroke="#0a0a8c" stroke-width="1.800"/><path d="M1583 9.500l3.500 3.500-3.500 3.500-3.500-3.500z" fill="#e01818"/>

<!-- bottom left buttons -->
<g fill="none" stroke="#000">
<rect x="12.500" y="939.500" width="26" height="27" stroke="#cdcd9e" stroke-width="2"/><rect x="17.500" y="944.500" width="17" height="17" stroke-width="1.200"/><path d="M19 946l13 13M19 946v5M19 946h5M32 959v-5M32 959h-5"/>
<rect x="44.500" y="939.500" width="26" height="27" stroke="#cdcd9e" stroke-width="2"/><path d="M49 961h16M49 961l12-16M50 950h5" stroke-width="1.200"/><path d="M60 955l3 3M63 955l-3 3" stroke-width=".8"/><path d="M51.500 960.500V947h15v14" stroke="#333" stroke-width=".8"/>
<rect x="80.500" y="945.500" width="15" height="15" stroke-width="1.200"/><path d="M80 953h16M88 945v16M80 951l8-6" stroke-width="1"/>
<rect x="331.500" y="944.500" width="17" height="17" stroke-width="1.200"/><path d="M340 947v8M340 957v2" stroke-width="1.600"/>
<path d="M160 943v22" stroke-dasharray="1.500 1.500"/>
</g>
<!-- scroll arrows -->
<path d="M153.500 114l5 10h-10z" fill="#5bcdb0" stroke="#a5e5d5"/>
<path d="M153.500 906l5-10h-10z" fill="#5bcdb0" stroke="#a5e5d5"/>
</svg>
</div></body></html>
